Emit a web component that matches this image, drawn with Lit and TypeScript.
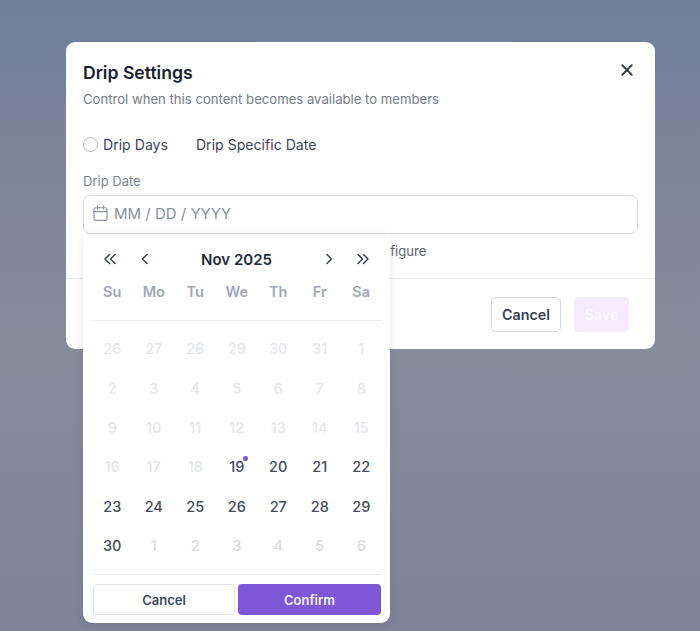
import { LitElement, html, css } from "lit";
import { customElement } from "lit/decorators.js";

const DAYS = ["Su", "Mo", "Tu", "We", "Th", "Fr", "Sa"];

// [label, active]
const CELLS: [number, boolean][] = [
  ...[26, 27, 28, 29, 30, 31].map((d): [number, boolean] => [d, false]),
  ...Array.from({ length: 18 }, (_, i): [number, boolean] => [i + 1, false]),
  ...Array.from({ length: 12 }, (_, i): [number, boolean] => [i + 19, true]),
  ...[1, 2, 3, 4, 5, 6].map((d): [number, boolean] => [d, false]),
];

@customElement("app-root")
export class AppRoot extends LitElement {
  static styles = css`
    :host {
      display: block;
      height: 631px;
      overflow: hidden;
      font-family: Inter, "Liberation Sans", sans-serif;
      background: linear-gradient(180deg, #6e7f9a 0%, #7b8499 22%, #878b9a 55%, #7f8397 100%);
    }
    .modal {
      position: relative;
      width: 589px;
      height: 307px;
      margin: 42px 0 0 66px;
      box-sizing: border-box;
      background: #fff;
      border-radius: 9px;
      display: flex;
      flex-direction: column;
    }
    .body {
      padding: 20px 17px 0;
      flex: 1;
    }
    .title {
      font-size: 17.6px;
      line-height: 21px;
      font-weight: 600;
      color: #1b2130;
    }
    .sub {
      margin-top: 7px;
      font-size: 13.13px;
      line-height: 18px;
      color: #757c8a;
    }
    .close {
      position: absolute;
      top: 20px;
      right: 20px;
      width: 16px;
      height: 16px;
    }
    .radios {
      display: flex;
      align-items: center;
      margin-top: 26px;
      height: 20px;
      font-size: 14.1px;
      color: #3d4452;
    }
    .radio {
      width: 13px;
      height: 13px;
      border: 1px solid #b5bac4;
      border-radius: 50%;
      margin-right: 5px;
    }
    .second {
      margin-left: 28px;
    }
    .label {
      margin-top: 18px;
      font-size: 13px;
      line-height: 18px;
      color: #7b8290;
    }
    .input {
      margin-top: 5px;
      width: 555px;
      height: 39px;
      box-sizing: border-box;
      border: 1px solid #d5d8de;
      border-radius: 7px;
      display: flex;
      align-items: center;
      gap: 6px;
      padding: 0 0 2px 9px;
      font-size: 15px;
      color: #8a909c;
    }
    .help {
      margin-top: 8px;
      padding-left: 282px;
      font-size: 13.1px;
      line-height: 18px;
      color: #5c6371;
    }
    .footer {
      border-top: 1px solid #e8eaee;
      height: 71px;
      box-sizing: border-box;
      display: flex;
      justify-content: flex-end;
      align-items: flex-start;
      gap: 13px;
      padding: 18px 26px 0 0;
    }
    .btn {
      height: 35px;
      box-sizing: border-box;
      border-radius: 5px;
      display: flex;
      align-items: center;
      justify-content: center;
      font-size: 14.3px;
      font-weight: 600;
    }
    .cancel {
      width: 70px;
      border: 1px solid #d5d8de;
      color: #3a4150;
      background: #fff;
    }
    .save {
      width: 55px;
      background: #f5ebfb;
      color: #fbf7fe;
    }
    .popup {
      position: absolute;
      left: 17px;
      top: 193px;
      width: 307px;
      height: 388px;
      box-sizing: border-box;
      background: #fff;
      border-radius: 0 0 9px 9px;
      box-shadow: 0 2px 8px rgba(40, 45, 60, 0.12);
      padding: 0 8.5px;
      display: flex;
      flex-direction: column;
    }
    .nav {
      height: 48px;
      display: flex;
      align-items: center;
      padding: 0 10px 0 9px;
    }
    .nav svg {
      width: 18px;
      height: 18px;
      flex: none;
    }
    .month {
      flex: 1;
      text-align: center;
      font-size: 15px;
      font-weight: 600;
      color: #252b39;
    }
    .arrow-l {
      margin-left: 17px;
    }
    .arrow-r {
      margin-right: 16px;
    }
    .week,
    .grid {
      display: grid;
      grid-template-columns: repeat(7, 41.5px);
    }
    .week {
      height: 16px;
      align-items: center;
      border-bottom: 1px solid #eceef1;
      padding-bottom: 21px;
      font-size: 14.5px;
      font-weight: 600;
      color: #a1a7b7;
      text-align: center;
    }
    .grid {
      grid-auto-rows: 39.4px;
      margin-top: 8px;
      text-align: center;
      font-size: 14.5px;
      font-weight: 500;
      color: #e4e6ea;
    }
    .grid > div {
      display: flex;
      align-items: center;
      justify-content: center;
    }
    .grid .on {
      color: #454c5a;
    }
    .grid .later {
      color: #d8dbe0;
    }
    .today {
      position: relative;
    }
    .dot {
      position: absolute;
      top: 9px;
      left: 27px;
      width: 4.5px;
      height: 4.5px;
      border-radius: 50%;
      background: #7e57d6;
    }
    .actions {
      margin-top: 9px;
      border-top: 1px solid #e8eaee;
      padding: 9px 0 0 1.5px;
      display: flex;
      gap: 3px;
    }
    .actions div {
      height: 31px;
      box-sizing: border-box;
      border-radius: 4px;
      display: flex;
      align-items: center;
      justify-content: center;
      font-size: 13px;
      font-weight: 600;
    }
    .a-cancel {
      width: 142px;
      border: 1px solid #dfe1e8;
      color: #434a58;
    }
    .a-confirm {
      width: 143px;
      background: #7e57d6;
      color: #f4effd;
    }
  `;

  renderCell(c: [number, boolean], i: number) {
    const later = i > 30;
    if (c[0] === 19 && c[1]) {
      return html`<div class="on today">19<span class="dot"></span></div>`;
    }
    return html`<div class="${c[1] ? "on" : later ? "later" : ""}">${c[0]}</div>`;
  }

  render() {
    return html`
      <div class="modal">
        <div class="body">
          <div class="title">Drip Settings</div>
          <div class="sub">Control when this content becomes available to members</div>
          <svg class="close" viewBox="0 0 16 16" fill="none" stroke="#2b3342" stroke-width="1.9" stroke-linecap="round">
            <path d="M3.2 3.2l9.6 9.6M12.8 3.2l-9.6 9.6" />
          </svg>
          <div class="radios">
            <span class="radio"></span><span>Drip Days</span>
            <span class="second">Drip Specific Date</span>
          </div>
          <div class="label">Drip Date</div>
          <div class="input">
            <svg width="15" height="17" viewBox="0 0 15 17" fill="none" stroke="#8a909c" stroke-width="1.1">
              <rect x="1" y="2.8" width="13" height="12.6" rx="2" />
              <path d="M1 6.6h13M4.5 1v3M10.5 1v3" stroke-linecap="round" />
            </svg>
            <span>MM / DD / YYYY</span>
          </div>
          <div class="help">Configure</div>
        </div>
        <div class="footer">
          <div class="btn cancel">Cancel</div>
          <div class="btn save">Save</div>
        </div>
        <div class="popup">
          <div class="nav">
            <svg viewBox="0 0 18 18" fill="none" stroke="#3a4150" stroke-width="1.5" stroke-linecap="round" stroke-linejoin="round">
              <path d="M8.5 4.5L4 9l4.5 4.5M14 4.5L9.5 9l4.5 4.5" />
            </svg>
            <svg class="arrow-l" viewBox="0 0 18 18" fill="none" stroke="#3a4150" stroke-width="1.5" stroke-linecap="round" stroke-linejoin="round">
              <path d="M11 4.5L6.5 9l4.5 4.5" />
            </svg>
            <div class="month">Nov 2025</div>
            <svg class="arrow-r" viewBox="0 0 18 18" fill="none" stroke="#3a4150" stroke-width="1.5" stroke-linecap="round" stroke-linejoin="round">
              <path d="M7 4.5L11.5 9 7 13.5" />
            </svg>
            <svg viewBox="0 0 18 18" fill="none" stroke="#3a4150" stroke-width="1.5" stroke-linecap="round" stroke-linejoin="round">
              <path d="M4 4.5L8.5 9 4 13.5M9.5 4.5L14 9l-4.5 4.5" />
            </svg>
          </div>
          <div class="week">${DAYS.map((d) => html`<div>${d}</div>`)}</div>
          <div class="grid">${CELLS.map((c, i) => this.renderCell(c, i))}</div>
          <div class="actions">
            <div class="a-cancel">Cancel</div>
            <div class="a-confirm">Confirm</div>
          </div>
        </div>
      </div>
    `;
  }
}
